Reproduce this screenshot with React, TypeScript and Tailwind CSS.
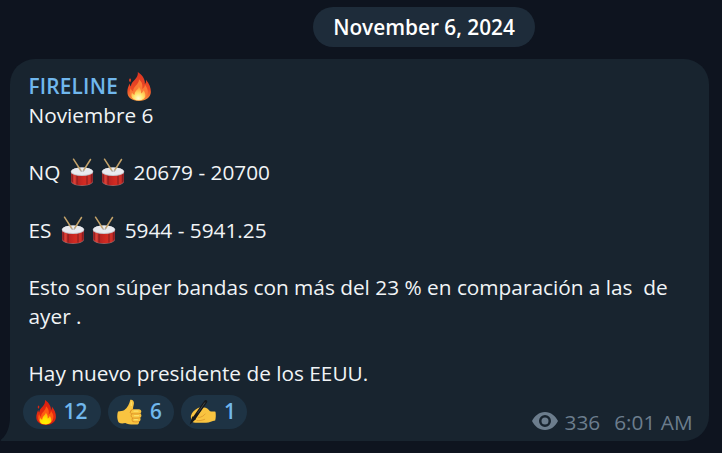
import type { ReactNode } from "react";

function Fire({ className, glow = false }: { className: string; glow?: boolean }) {
  const id = glow ? "fireSoft" : "fireFlat";
  return (
    <svg viewBox="0 0 24 30" className={className} aria-hidden="true" preserveAspectRatio="none">
      <defs>
        <linearGradient id={id} x1="0" y1="0" x2="0" y2="1">
          <stop offset="0" stopColor={glow ? "#dc3522" : "#d91e10"} />
          <stop offset="0.6" stopColor={glow ? "#ee4a25" : "#e62b10"} />
          <stop offset="1" stopColor={glow ? "#f3943c" : "#cf1a12"} />
        </linearGradient>
        <radialGradient id={id + "Core"} cx="0.5" cy="0.85" r="0.75">
          <stop offset="0" stopColor={glow ? "#fffbd0" : "#fff200"} />
          <stop offset="0.45" stopColor={glow ? "#ffe46a" : "#ffe600"} />
          <stop offset="1" stopColor={glow ? "#ff9a3a" : "#ffae10"} />
        </radialGradient>
      </defs>
      <path fill={`url(#${id})`} d="M10.800 0c2.700 1.800 5 4.200 6.100 7 .9 2.300 1.200 3.500.9 5.500 1.200-1.300 1.500-2.800 1.200-4.600 3.300 3.900 5 8.200 4.900 12.900C23.500 26.500 19 30 12 30S.3 26.400.4 20.800c0-3 .8-5.800 2.300-8.800.1 1.300.5 2.200 1.200 3.100C4 12 5.600 10 8 7.700 10 5.500 11.300 3 10.800 0ZM3 6.500c1.200.8 1.400 2.200.2 4C1.700 9.500 1.700 7.800 3 6.500Z" />
      <path fill={glow ? "#fb7a35" : "#ff5a12"} d="M12 7.500c2.400 2.300 3.500 4.500 3.400 7.400 0 1.200-.2 2-.5 2.800 1.800-.9 3-2.500 3-4.800 2.300 3 3.400 6.300 2.800 9.100C19.800 27 16.500 29 12 29c-5 0-8.600-2-9.200-6.200-.3-2 .1-4.200.9-6 .6 1.900 1.300 2.800 2.500 3.400C5.800 14.800 12 13.300 12 7.500Z" />
      <path fill={`url(#${id}Core)`} d="M11.700 15c1.800 2.300 2.600 4.200 2.300 7.200 1.300-.6 2-1.500 2.500-3.200 2.600 3.200 3.800 10.300-4.500 10.300-7.700 0-8.500-4.300-7-8.100.6 1.300 1.400 1.900 2.600 2.300-.3-4.200 4-5 4.100-8.500Z" />
    </svg>
  );
}

function Drum({ className = "" }: { className?: string }) {
  return (
    <svg viewBox="0 0 24 28" className={`-mb-[6px] inline-block h-[28px] w-[24px] align-baseline ${className}`} aria-hidden="true">
      <defs>
        <linearGradient id="shell" x1="0" x2="1">
          <stop offset="0" stopColor="#a81d20" />
          <stop offset="0.15" stopColor="#d94036" />
          <stop offset="0.3" stopColor="#b82220" />
          <stop offset="0.6" stopColor="#d22a22" />
          <stop offset="0.85" stopColor="#cc3028" />
          <stop offset="1" stopColor="#9b191f" />
        </linearGradient>
      </defs>
      <path fill="#8f6f72" d="M1 13.500v9.800c0 6.200 22 6.200 22 0v-9.800Z" />
      <path fill="url(#shell)" d="M1.200 13.500v9.200c0 6.100 21.600 6.100 21.600 0v-9.200Z" />
      <path fill="none" stroke="#701b20" strokeWidth=".8" d="M7 17v9.500M17 17v9.500M2.200 16.500v7.500M21.800 16.500v7.500" />
      <ellipse cx="12" cy="13.700" rx="11.300" ry="4.300" fill="#c4c6cc" />
      <ellipse cx="12" cy="13.200" rx="10.700" ry="3.800" fill="#e9ebf0" />
      <path stroke="#c4a36a" strokeWidth="1.500" strokeLinecap="round" d="m3.500 1.200 7.300 11.300M20.500 1.500 13.500 12.500" />
      <path stroke="#a9a9ad" strokeWidth="1" strokeLinecap="round" d="m10.400 12 .9 1.500M13.900 12l-.9 1.500" />
    </svg>
  );
}

function ThumbsUp() {
  return (
    <svg viewBox="0 0 25 26" className="h-[26px] w-[25px]" aria-hidden="true">
      <path fill="#f9c440" d="M13.300.7c2.700-.5 4.100 1.700 3.500 4.500-.4 2-.9 3.500-.9 5.100h5.900c2.800.1 3.200 3 1.500 4.200 1.700 1.200 1.300 3.600-.2 4.300 1 1.500.3 3.400-1.200 3.900.5 1.500-.6 2.800-2.400 2.800-3.900.2-8.400.2-11.200-1.400-2.500.6-4.700.6-6.500-.5C-.1 20.500-.1 15.600 1 12.600c2.500-.9 4.500-.2 6.100-1.400 3.400-2.500 5.200-6 6.200-10.500Z" />
      <path fill="none" stroke="#d98b25" strokeWidth=".8" strokeLinecap="round" d="M15.900 10.300c-1.700.3-2.400 1.300-2.500 2.600M23.100 14.500c-2.400.8-5.600.3-8.100.3M22.900 18.800c-2.200.7-5.100.4-7.300.2M21.700 22.700c-1.800.4-4.100.3-5.700-.1M14.300 11.700c-2 1.300-.9 3 .6 3.100-1.200 1-1.200 3.200.7 4.200-1 1.200-.6 2.800.4 3.600" />
      <path stroke="#fbe16b" strokeWidth="1.200" strokeLinecap="round" d="M17 12.200h4M17.500 16.700h4M17.600 20.700h2.800M14.300 3v3.500" />
    </svg>
  );
}

function WritingHand() {
  return (
    <svg viewBox="0 0 27 27" className="h-[27px] w-[27px]" aria-hidden="true">
      <path fill="#f9c440" d="M2 16.500c.8-3 3.700-5.900 7-7.500 2-.7 4.200-.2 5.700-.5 2.500-.2 4.400 1.500 6.300 3.700 1.800.7 3.600.2 5.500.5.500 2.800.4 6-.3 8.800-3.200.4-5.600 2.200-9.200 2.300H6.200c-2-.1-3.200-.9-3-2.300-1-.9-1.700-3.400-1.200-5Z" />
      <path fill="none" stroke="#dc952b" strokeWidth=".8" strokeLinecap="round" d="M9.500 18.300c2.700.3 5.200-1.300 6.700-3.300M8 21.600c2.500.2 5.500-.2 7.700-1.300" />
      <path stroke="#15171a" strokeWidth="3.200" strokeLinecap="round" d="M16.700 2.600 5.300 19" />
      <path fill="#15171a" d="M3.400 17.200 7 20 .7 25.700Z" />
      <path stroke="#50575c" strokeWidth=".7" d="m16 3.500-7.500 10.700" />
      <path fill="#f9c440" d="M11.500 13.700c1.200-.7 2.600-.3 2.900.8-.9 1.600-2.500 2.800-5 3.400-.4-.9.500-2.500 2.100-4.200Z" />
    </svg>
  );
}

function Reaction({ children, count, className }: { children: ReactNode; count: number; className: string }) {
  return (
    <div className={`flex h-[34px] items-center rounded-full bg-[#1e3344] text-[20.8px] font-semibold text-[#70b7ed] ${className}`}>
      {children}
      <span className="ml-[8px]">{count}</span>
    </div>
  );
}

export default function App() {
  return (
    <div className="flex h-[453px] w-[722px] flex-col overflow-hidden bg-[#0e141f] font-['Open_Sans','Noto_Sans',sans-serif]">
      <div className="ml-[313px] mt-[7px] flex h-10 w-[222px] shrink-0 items-center justify-center rounded-full bg-[#1e2c3a] pt-[2px] text-[20.8px] font-semibold text-white">
        November 6, 2024
      </div>
      <div className="relative ml-[10px] mt-3 flex h-[382px] w-[699px] flex-col rounded-[25px] rounded-bl-none bg-[#18242f] pl-[18.500px] pt-[13px]">
        <svg viewBox="0 0 10 24" className="absolute -left-[10px] bottom-0 h-6 w-[10px]" aria-hidden="true">
          <path fill="#18242f" d="M10 0v24H1.500C.5 24 .5 23 1.500 22.300 6.500 18.500 10 10 10 0Z" />
        </svg>
        <div className="h-[315px] w-[660px] whitespace-pre text-[20.8px] leading-[28.7px] text-[#f1f4f6]">
          <div className="flex font-semibold tracking-[0.2px] text-[#70b7ed]">
            FIRELINE
            <Fire glow className="ml-[9px] h-[29px] w-[24px]" />
          </div>
          <div>Noviembre 6</div>
          <br />
          <div>NQ <Drum className="ml-[4px] mr-[2px]" /> <Drum className="mr-[3px]" /> 20679 - 20700</div>
          <br />
          <div>ES <Drum className="ml-[4px] mr-[2px]" /> <Drum className="mr-[3px]" /> 5944 - 5941.25</div>
          <br />
          <div>Esto son súper bandas con más del 23 % en comparación a las  de</div>
          <div>ayer .</div>
          <br />
          <div>Hay nuevo presidente de los EEUU.</div>
        </div>
        <div className="-ml-[5.500px] mt-[8px] flex gap-[7px]">
          <Reaction count={12} className="w-[78px] pl-[12.500px]">
            <Fire className="h-[25px] w-[20px]" />
          </Reaction>
          <Reaction count={6} className="w-[66px] pl-[9px]">
            <ThumbsUp />
          </Reaction>
          <Reaction count={1} className="w-[66px] pl-[8px]">
            <WritingHand />
          </Reaction>
          <div className="ml-[278px] mt-[11px] flex h-[34px] items-center text-[20.8px] text-[#6c7d8d]">
            <svg viewBox="0 0 26 18" className="-mt-[4px] h-[18px] w-[26px]" aria-hidden="true">
              <path fill="currentColor" fillRule="evenodd" d="M13 0c6 0 10.500 4 13 9-2.500 5-7 9-13 9S2.500 14 0 9C2.500 4 7 0 13 0Zm0 3a6 6 0 1 0 0 12 6 6 0 0 0 0-12Zm0 2.500a3.500 3.500 0 1 1 0 7 3.500 3.500 0 0 1 0-7Z" />
            </svg>
            <span className="ml-[6.500px]">336</span>
            <span className="ml-[14px] whitespace-nowrap">6:01 AM</span>
          </div>
        </div>
      </div>
    </div>
  );
}
